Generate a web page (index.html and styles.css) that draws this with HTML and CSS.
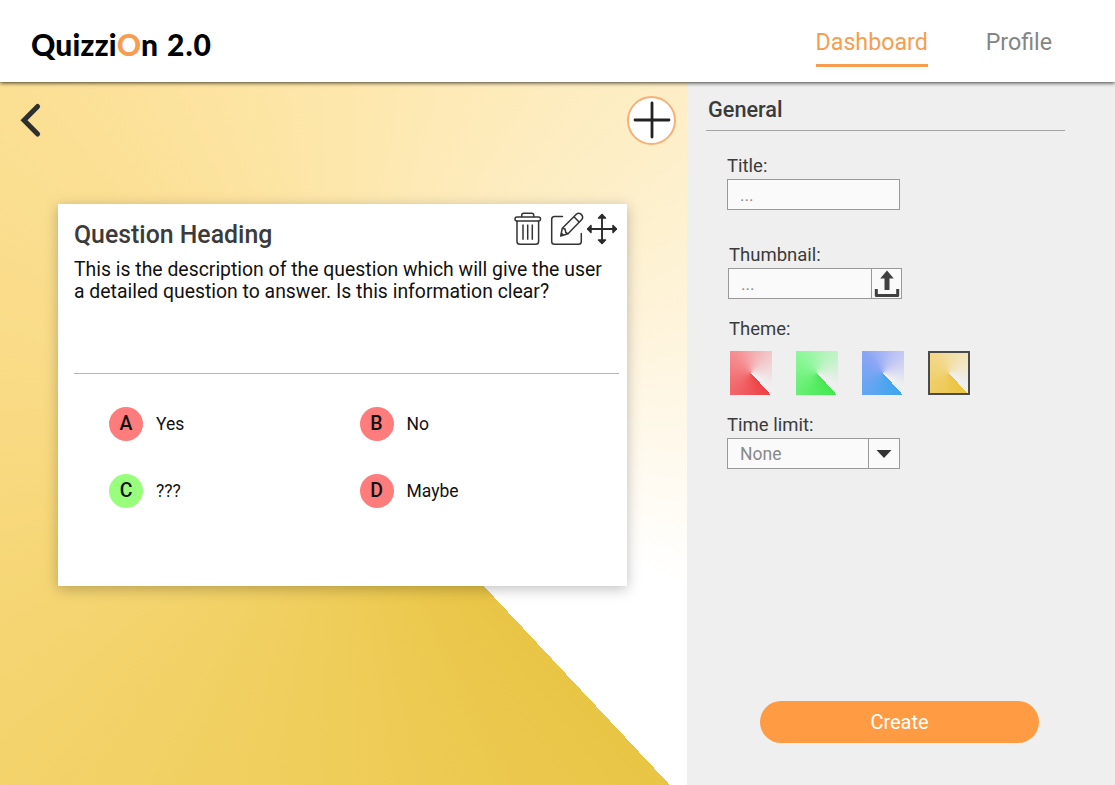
FILE: index.html
```html
<!DOCTYPE html>
<html lang="en">
<head>
<meta charset="utf-8">
<title>QuizziOn 2.0</title>
<link rel="stylesheet" href="styles.css">
</head>
<body>
<header class="topbar">
  <div class="logo"><span class="logo-start">Quizzi</span><span class="logo-o">O</span><span class="logo-n">n</span><span class="logo-version">2.0</span></div>
  <nav class="nav">
    <a class="nav-link active">Dashboard</a>
    <a class="nav-link">Profile</a>
  </nav>
</header>
<main class="workspace">
  <section class="stage">
    <div class="stage-tools">
      <svg class="back" width="24" height="36" viewBox="0 0 24 36"><path d="M18.600 4.500 5 18.200 18.600 32" fill="none" stroke="#2d2f30" stroke-width="5" stroke-linecap="round" stroke-linejoin="miter"/></svg>
      <button class="add"><svg width="38" height="38" viewBox="0 0 38 38"><path d="M19 2v34M2 19h34" stroke="#222" stroke-width="2.800" stroke-linecap="round"/></svg></button>
    </div>
    <article class="card">
      <div class="card-head">
        <h1 class="card-title">Question Heading</h1>
        <div class="card-actions">
          <svg width="28" height="34" viewBox="0 0 28 34" fill="none" stroke="#333" stroke-width="1.500"><path d="M7.700 5V3.200Q7.700 1.200 9.700 1.200h8Q19.700 1.200 19.700 3.200V5"/><rect x="1" y="5" width="25.500" height="4" rx="2"/><path d="M3 9v20.500Q3 32.300 5.800 32.300h16Q24.600 32.300 24.600 29.500V9"/><path d="M9 12.500v15.300M13.700 12.500v15.300M18.300 12.500v15.300"/></svg>
          <svg width="34" height="34" viewBox="0 0 34 34" fill="none" stroke="#333" stroke-width="1.500" stroke-linecap="round" stroke-linejoin="round"><path d="M12.500 4.500H4.500Q1.700 4.500 1.700 7.300V29.500Q1.700 32.300 4.500 32.300H28.500Q31.300 32.300 31.300 29.500V21.500"/><path d="M10.700 24 12.300 16.300 26.300 2.300Q28.800.300 31.200 2.400 33.800 5 31.800 7.500L18 21.800ZM12.300 16.300 15 17 15.800 20.500 18 21.800M10.700 24 11.300 21 13.500 23ZM24 4.700l5.300 5.500"/></svg>
          <svg width="32" height="32" viewBox="0 0 32 32" fill="none" stroke="#2b2b2b" stroke-width="1.900" stroke-linecap="round" stroke-linejoin="round"><path d="M16 2v28M2 16h28"/><path d="M12.500 5 16 1.600 19.500 5ZM12.500 27 16 30.400 19.500 27ZM5 12.500 1.600 16 5 19.500ZM27 12.500 30.400 16 27 19.500Z" fill="#2b2b2b" stroke-width="1.500"/></svg>
        </div>
      </div>
      <p class="card-text">This is the description of the question which will give the user<br>a detailed question to answer. Is this information clear?</p>
      <div class="answers">
        <div class="answer"><span class="badge wrong">A</span><span>Yes</span></div>
        <div class="answer"><span class="badge wrong">B</span><span>No</span></div>
        <div class="answer"><span class="badge right">C</span><span>???</span></div>
        <div class="answer"><span class="badge wrong">D</span><span>Maybe</span></div>
      </div>
    </article>
  </section>
  <aside class="panel">
    <h2 class="panel-title">General</h2>
    <div class="field title-field">
      <div class="label">Title:</div>
      <div class="input"><span class="value dots">...</span></div>
    </div>
    <div class="field thumb-field">
      <div class="label">Thumbnail:</div>
      <div class="input"><span class="value dots">...</span><span class="addon"><svg width="26" height="28" viewBox="0 0 26 28"><path d="M13 .500 19.800 8.500H15.500V20H10.500V8.500H6.200Z" fill="#404040"/><path d="M2.300 19v6.600H23.700V19" fill="none" stroke="#404040" stroke-width="3" stroke-linejoin="round"/></svg></span></div>
    </div>
    <div class="field theme-field">
      <div class="label">Theme:</div>
      <div class="themes">
        <span class="theme red"></span><span class="theme green"></span><span class="theme blue"></span><span class="theme yellow"></span>
      </div>
    </div>
    <div class="field time-field">
      <div class="label">Time limit:</div>
      <div class="input"><span class="value">None</span><span class="addon wide"><svg width="16" height="8" viewBox="0 0 16 8"><path d="M.500 0h15L8 8Z" fill="#333"/></svg></span></div>
    </div>
    <button class="create">Create</button>
  </aside>
</main>
</body>
</html>
```
FILE: styles.css
```css
* { box-sizing: border-box; }
body {
  margin: 0;
  width: 1115px;
  height: 785px;
  overflow: hidden;
  display: flex;
  flex-direction: column;
  background: #efefef;
  font-family: Roboto, "Liberation Sans", sans-serif;
  color: #3b3b3b;
}
h1, h2, p { margin: 0; font-weight: 500; }
button { font-family: inherit; border: 0; padding: 0; }
svg { display: block; flex: none; }

.topbar {
  flex: none;
  height: 82px;
  padding: 0 63px 0 31px;
  display: flex;
  justify-content: space-between;
  background: #fff;
  box-shadow: 0 1px 4px rgba(0, 0, 0, .75);
  z-index: 1;
}
.logo {
  display: flex;
  padding-top: 25px;
  font: 900 30px/38px Lato, sans-serif;
  color: #000;
  white-space: nowrap;
}
.logo-start { letter-spacing: .200px; }
.logo-o { color: #f89d4f; }
.logo-version { margin-left: 9px; letter-spacing: 1px; }
.nav { display: flex; gap: 58px; padding-top: 27px; }
.nav-link {
  height: 40px;
  font-size: 23.200px;
  line-height: 30px;
  color: #858585;
}
.nav-link.active { color: #f89d4f; border-bottom: 3px solid #f89d4f; }

.workspace { flex: 1; display: flex; }
.stage {
  flex: none;
  width: 687px;
  background: conic-gradient(from 136.900deg at 340.500px 351px,
    #e9c546 0deg, #efcd59 43deg, #f3d36b 88deg, #f9da82 133deg,
    #fbdf93 178deg, #fde7ab 223deg, #fdeec6 268deg, #fff9ec 315deg,
    #fff 338deg, #fff 360deg);
}
.stage-tools {
  display: flex;
  justify-content: space-between;
  align-items: flex-start;
  padding: 14px 11px 0 19px;
}
.back { margin-top: 6px; }
.add {
  width: 49px;
  height: 49px;
  display: grid;
  place-items: center;
  border: 2px solid #f9b077;
  border-radius: 50%;
  background: #fff;
}
.add svg { margin-top: -1px; }
.card {
  width: 569px;
  height: 382px;
  margin: 59px 0 0 58px;
  padding: 8px 8px 0 16px;
  background: #fff;
  box-shadow: 0 3px 13px rgba(0, 0, 0, .25);
}
.card-head { display: flex; justify-content: space-between; height: 45px; }
.card-title { padding-top: 8px; font-size: 24.850px; line-height: 30px; }
.card-actions { display: flex; padding-right: 1px; }
.card-actions svg:nth-child(2) { margin-left: 8px; }
.card-actions svg:nth-child(3) { margin: 1px 0 0 2px; }
.card-text {
  height: 117px;
  padding-top: 1.500px;
  border-bottom: 1px solid #b5b5b5;
  font-size: 19.400px;
  font-weight: 400;
  line-height: 22.600px;
  color: #111;
  white-space: nowrap;
}
.answers {
  display: grid;
  grid-template-columns: 250.500px 200px;
  row-gap: 33px;
  padding: 33px 0 0 35px;
  font-size: 17.500px;
  line-height: 20px;
  color: #111;
}
.answer { display: flex; align-items: center; gap: 13px; height: 34px; }
.badge {
  width: 34px;
  height: 34px;
  border-radius: 50%;
  text-align: center;
  font-size: 19.500px;
  font-weight: 500;
  line-height: 34px;
}
.wrong { background: #ff7c7c; }
.right { background: #97ff7c; }

.panel {
  flex: 1;
  display: flex;
  flex-direction: column;
  padding: 0 50px 0 19px;
  background: #efefef;
}
.panel-title {
  height: 49px;
  padding: 14px 0 0 2px;
  border-bottom: 1px solid #a5a5a5;
  font-size: 21.700px;
  line-height: 28px;
}
.field { width: 173px; margin-left: 21px; }
.label { font-size: 18.500px; line-height: 22px; }
.title-field { margin-top: 24px; }
.thumb-field { margin: 34px 0 0 22px; }
.thumb-field .label, .theme-field .label { padding-left: 1px; }
.thumb-field .input { width: 174px; }
.theme-field { margin: 19px 0 0 22px; }
.time-field { margin-top: 19px; }
.input {
  display: flex;
  height: 31px;
  margin-top: 2px;
  border: 1px solid #999;
  background: #fafafa;
}
.value { flex: 1; padding-left: 12px; font-size: 17.500px; line-height: 30px; color: #898989; }
.dots { font-size: 17px; }
.addon {
  width: 30px;
  display: grid;
  place-items: center;
  border-left: 1px solid #999;
}
.addon.wide { width: 31px; }
.themes { display: flex; gap: 24px; margin: 11px 0 0 2px; }
.theme { flex: none; width: 42px; height: 44px; }
.red { background: conic-gradient(from 138deg, #ed4245, #f58d90 50%, #f2c9cb 75%, #efefef 96%); }
.green { background: conic-gradient(from 138deg, #44e84f, #8df79a 50%, #c1f3c7 75%, #efefef 96%); }
.blue { background: conic-gradient(from 138deg, #42a5ee, #8ba5f5 50%, #c5caf3 75%, #efefef 96%); }
.yellow { border: 2px solid #4b4b4b; background: conic-gradient(from 138deg, #ebc443, #f3d787 50%, #f2e4bd 75%, #efefef 96%); }
.create {
  width: 279px;
  height: 42px;
  margin: auto 0 42px 54px;
  border-radius: 21px;
  background: #ff9b42;
  color: #fff;
  font-size: 20px;
}
```
